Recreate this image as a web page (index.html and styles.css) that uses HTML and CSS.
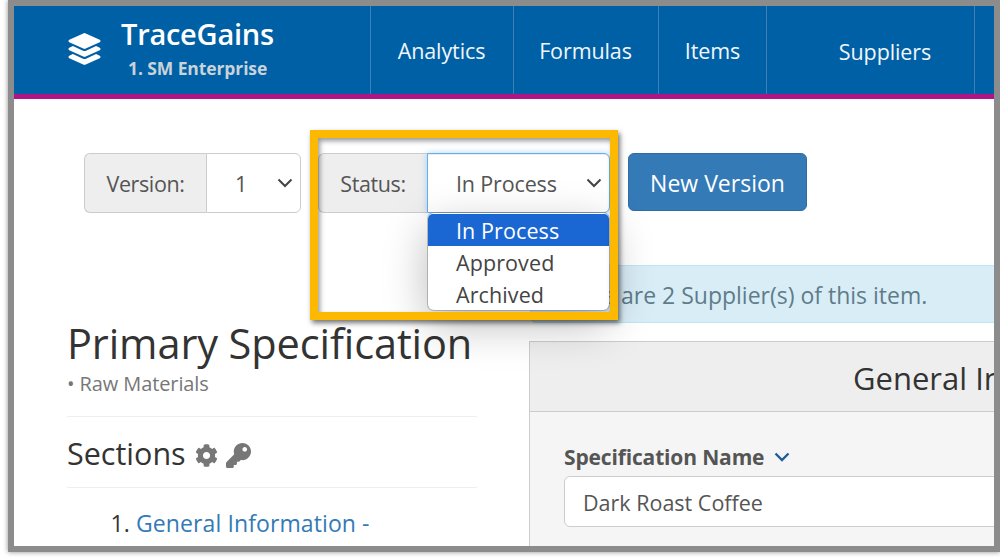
FILE: index.html
```html
<!DOCTYPE html>
<html lang="en">
<head>
<meta charset="utf-8">
<title>TraceGains</title>
<link rel="stylesheet" href="styles.css">
</head>
<body>
<div class="frame">
  <div class="page">
    <nav class="nav">
      <div class="brand">
        <svg class="brand-icon" viewBox="0 0 512 512"><path d="M12.41 148.02l232.94 105.67c6.8 3.09 14.49 3.09 21.29 0l232.94-105.67c16.55-7.51 16.55-32.52 0-40.03L266.65 2.31a25.607 25.607 0 0 0-21.29 0L12.41 107.98c-16.55 7.51-16.55 32.53 0 40.04zm487.18 88.28l-58.09-26.33-161.64 73.27c-7.56 3.43-15.59 5.17-23.86 5.17s-16.29-1.74-23.86-5.17L70.51 209.97l-58.1 26.33c-16.55 7.5-16.55 32.5 0 40l232.94 105.59c6.8 3.08 14.49 3.08 21.29 0L499.59 276.3c16.55-7.5 16.55-32.5 0-40zm0 127.8l-57.87-26.23-161.86 73.37c-7.56 3.43-15.59 5.17-23.86 5.17s-16.29-1.74-23.86-5.17L70.29 337.87 12.41 364.1c-16.55 7.5-16.55 32.5 0 40l232.94 105.59c6.8 3.08 14.49 3.08 21.29 0L499.59 404.1c16.55-7.5 16.55-32.5 0-40z"/></svg>
        <div class="brand-text">
          <div class="brand-name">TraceGains</div>
          <div class="brand-sub">1. SM Enterprise</div>
        </div>
      </div>
      <a class="nav-item nav-analytics">Analytics</a>
      <a class="nav-item nav-formulas">Formulas</a>
      <a class="nav-item nav-items">Items</a>
      <a class="nav-item nav-suppliers">Suppliers</a>
      <span class="nav-rest"></span>
    </nav>

    <div class="content">
      <div class="controls">
        <div class="group group-version">
          <span class="addon addon-version">Version:</span>
          <span class="select select-version">1
            <svg class="chev" viewBox="0 0 16 10"><path d="M1.5 1.5L8 8l6.5-6.5"/></svg>
          </span>
        </div>
        <div class="group group-status">
          <span class="addon addon-status">Status:</span>
          <span class="select select-status">In Process
            <svg class="chev" viewBox="0 0 16 10"><path d="M1.5 1.5L8 8l6.5-6.5"/></svg>
          </span>
          <ul class="menu">
            <li class="menu-item active">In Process</li>
            <li class="menu-item">Approved</li>
            <li class="menu-item">Archived</li>
          </ul>
        </div>
        <button class="btn-primary">New Version</button>
        <div class="highlight"></div>
      </div>

      <div class="columns">
        <aside class="sidebar">
          <h1 class="title">Primary Specification</h1>
          <div class="subtitle">• Raw Materials</div>
          <div class="sections-head">
            <h2 class="sections-title">Sections</h2>
            <svg class="icon-cog" viewBox="0 0 512 512"><path d="M487.4 315.7l-42.6-24.6c4.3-23.2 4.3-47 0-70.2l42.6-24.6c4.9-2.8 7.1-8.6 5.5-14-11.1-35.6-30-67.8-54.7-94.6-3.8-4.1-10-5.1-14.8-2.3L380.8 110c-17.9-15.4-38.5-27.3-60.8-35.1V25.8c0-5.6-3.9-10.5-9.4-11.7-36.7-8.2-74.3-7.8-109.2 0-5.5 1.2-9.4 6.1-9.4 11.7V75c-22.2 7.9-42.8 19.8-60.8 35.1L88.7 85.5c-4.9-2.8-11-1.9-14.8 2.3-24.7 26.7-43.6 58.9-54.7 94.6-1.7 5.4.6 11.2 5.5 14L67.3 221c-4.3 23.2-4.3 47 0 70.2l-42.6 24.6c-4.9 2.8-7.1 8.6-5.5 14 11.1 35.6 30 67.8 54.7 94.6 3.8 4.1 10 5.1 14.8 2.3l42.6-24.6c17.9 15.4 38.5 27.3 60.8 35.1v49.2c0 5.6 3.9 10.5 9.4 11.7 36.7 8.2 74.3 7.8 109.2 0 5.5-1.2 9.4-6.1 9.4-11.7v-49.2c22.2-7.9 42.8-19.8 60.8-35.1l42.6 24.6c4.9 2.8 11 1.9 14.8-2.3 24.7-26.7 43.6-58.9 54.7-94.6 1.5-5.5-.7-11.3-5.6-14.1zM256 336c-44.1 0-80-35.9-80-80s35.9-80 80-80 80 35.9 80 80-35.9 80-80 80z"/></svg>
            <svg class="icon-key" viewBox="0 0 512 512"><path d="M512 176.001C512 273.203 433.202 352 336 352c-11.22 0-22.19-1.062-32.827-3.069l-24.012 27.014A23.999 23.999 0 0 1 261.223 384H224v40c0 13.255-10.745 24-24 24h-40v40c0 13.255-10.745 24-24 24H24c-13.255 0-24-10.745-24-24v-78.059c0-6.365 2.529-12.47 7.029-16.971l161.802-161.802C163.108 213.814 160 195.271 160 176 160 78.798 238.797.001 335.999 0 433.488-.001 512 78.511 512 176.001zM336 128c0 26.51 21.49 48 48 48s48-21.49 48-48-21.49-48-48-48-48 21.49-48 48z"/></svg>
          </div>
          <ol class="section-list">
            <li><a class="section-link">General Information -</a></li>
          </ol>
        </aside>

        <main class="main">
          <div class="alert">There are 2 Supplier(s) of this item.</div>
          <section class="panel">
            <header class="panel-head"><h3 class="panel-title">General Information</h3></header>
            <div class="panel-body">
              <label class="field-label">Specification Name
                <svg class="label-chev" viewBox="0 0 16 10"><path d="M1.5 1.5L8 8l6.5-6.5"/></svg>
              </label>
              <div class="input">Dark Roast Coffee</div>
            </div>
          </section>
        </main>
      </div>
    </div>
  </div>
</div>
</body>
</html>
```
FILE: styles.css
```css
* { box-sizing: border-box; }
html, body { margin: 0; padding: 0; height: 560px; overflow: hidden; background: #fff; }
body { font-family: "Open Sans", "Noto Sans", sans-serif; color: #333; }

.frame {
  margin-left: 8px;
  width: 992px;
  height: 552px;
  border: 6px solid #8c8c8c;
  box-shadow: 0 0 5px rgba(0, 0, 0, .45);
}
.page { height: 540px; overflow: hidden; background: #fff; }

/* navbar */
.nav {
  display: flex;
  height: 93px;
  background: #0060a5;
  border-bottom: 5px solid #b01587;
  color: #fff;
}
.brand {
  width: 357px;
  display: flex;
  padding-left: 54px;
  padding-top: 27px;
  border-right: 1px solid #3f7fb5;
}
.brand-icon { width: 33px; height: 32px; fill: #fff; }
.brand-text { margin-left: 20px; margin-top: -18px; }
.brand-name { font-size: 29px; font-weight: 600; line-height: 38px; letter-spacing: -.25px; }
.brand-sub { font-size: 17.5px; font-weight: 700; line-height: 24px; color: #c9d3da; margin-left: 7px; margin-top: 3px; letter-spacing: -.1px; }
.nav-item {
  display: flex;
  align-items: center;
  justify-content: center;
  font-size: 21.5px;
  letter-spacing: -.1px;
  color: #f2f6fa;
  border-right: 1px solid #3f7fb5;
}
.nav-analytics { width: 143px; padding-right: 1px; }
.nav-formulas { width: 145px; padding-right: 1px; }
.nav-items { width: 108px; }
.nav-suppliers { width: 208px; padding: 2px 0 0 29px; }
.nav-rest { flex: 1; }

/* controls */
.content { position: relative; }
.controls {
  position: relative;
  display: flex;
  align-items: flex-start;
  padding: 54px 0 0 70px;
}
.group { display: flex; height: 60px; font-size: 21.5px; color: #555; position: relative; }
.group-status { margin-left: 17px; }
.addon {
  display: flex;
  align-items: center;
  justify-content: center;
  background: #eee;
  border: 1px solid #ccc;
  border-right: 0;
  border-radius: 6px 0 0 6px;
  letter-spacing: -.4px;
}
.addon-version { width: 122px; }
.addon-status { width: 109px; }
.select {
  position: relative;
  display: flex;
  align-items: center;
  background: #fff;
  border: 1px solid #ccc;
  border-radius: 0 6px 6px 0;
  letter-spacing: -.15px;
}
.select-version { width: 95px; padding-left: 28px; }
.select-status {
  width: 183px;
  padding-left: 28px;
  border-color: #66afe9;
  box-shadow: inset 0 1px 1px rgba(0, 0, 0, .075), 0 0 6px rgba(102, 175, 233, .5);
}
.chev { position: absolute; right: 7px; top: 24px; width: 16px; height: 10px; fill: none; stroke: #444; stroke-width: 2; }
.btn-primary {
  margin-left: 18px;
  width: 179px;
  height: 58px;
  background: #337ab7;
  border: 1px solid #2e6da4;
  border-radius: 6px;
  color: #fff;
  font: 23px "Open Sans", sans-serif;
  padding: 2px 0 0;
}

/* native dropdown popup */
.menu {
  position: absolute;
  z-index: 3;
  left: 110px;
  top: 60px;
  width: 181px;
  height: 97px;
  margin: 0;
  padding: 1px 0 0;
  list-style: none;
  background: #fff;
  border-radius: 6px;
  box-shadow: 0 0 0 1px rgba(120, 120, 120, .45), 0 14px 44px rgba(0, 0, 0, .28);
}
.menu-item { height: 32px; line-height: 33px; padding-left: 28px; font-size: 21.5px; color: #444; letter-spacing: .1px; }
.menu-item.active { background: #1a66d2; color: #fff; border-radius: 5px 5px 0 0; }

/* annotation box */
.highlight {
  position: absolute;
  z-index: 4;
  left: 296px;
  top: 31px;
  width: 308px;
  height: 190px;
  border: 8px solid #fdb900;
  box-shadow: 2px 3px 5px rgba(0, 0, 0, .55), inset 2px 3px 5px rgba(0, 0, 0, .4);
}

/* columns */
.columns { display: flex; padding: 52px 0 0 53px; }
.sidebar { width: 410px; flex: none; padding-top: 52px; }
.title { margin: 0; font-size: 41.5px; font-weight: 500; line-height: 52px; color: #333; letter-spacing: -.1px; white-space: nowrap; }
.subtitle { font-size: 20px; line-height: 26px; margin-top: 2px; color: #777; letter-spacing: -.1px; padding-bottom: 19px; border-bottom: 1px solid #eee; }
.sections-head {
  display: flex;
  align-items: center;
  height: 71px;
  padding-top: 2px;
  border-bottom: 1px solid #eee;
}
.sections-title { margin: 0; font-size: 30.5px; font-weight: 500; color: #333; }
.icon-cog { width: 23px; height: 25px; margin-left: 9px; fill: #777; margin-top: 4px; }
.icon-key { width: 25px; height: 25px; margin-left: 8px; fill: #777; margin-top: 4px; }
.section-list { margin: 19px 0 0; padding: 0 0 0 69px; font-size: 23px; line-height: 32px; letter-spacing: .1px; color: #333; }
.section-link { color: #337ab7; }

.main { width: 465px; margin-left: 52px; flex: none; }
.alert {
  margin-left: 1px;
  width: 600px;
  height: 58px;
  padding: 1px 22px 0;
  line-height: 56px;
  background: #d9edf7;
  border: 1px solid #bce8f1;
  border-radius: 6px;
  font-size: 23px;
  color: #5f7c8a;
  white-space: nowrap;
}
.panel { margin-top: 18px; width: 700px; background: #f5f5f5; border: 1px solid #ccc; }
.panel-head { height: 70px; background: #eee; border-bottom: 1px solid #ccc; padding: 2px 0 0 323px; display: flex; align-items: center; }
.panel-title { margin: 0; font-size: 31px; font-weight: 500; color: #333; white-space: nowrap; }
.panel-body { padding: 30px 34px 30px; }
.field-label { display: flex; align-items: center; height: 30px; font-size: 21px; font-weight: 700; color: #555; letter-spacing: -.15px; }
.label-chev { width: 16px; height: 10px; margin-left: 10px; fill: none; stroke: #1e5f99; stroke-width: 2.4; }
.input {
  margin-top: 4px;
  height: 51px;
  line-height: 51px;
  padding-left: 18px;
  background: #fff;
  border: 1px solid #ccc;
  border-radius: 6px;
  font-size: 21.5px;
  color: #555;
}
```
